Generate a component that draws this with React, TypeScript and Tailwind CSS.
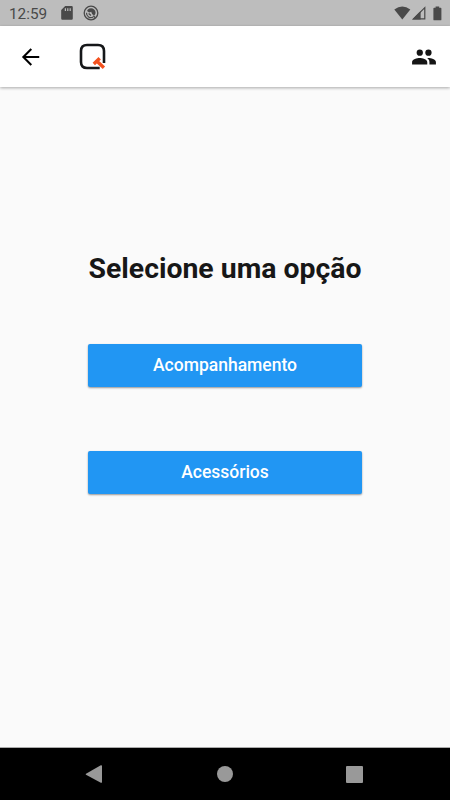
import React from "react";

function StatusBar() {
  return (
    <div className="flex h-[26px] shrink-0 items-center bg-[#bdbdbd] pl-[9px] pr-[8px] text-[#494949]">
      <span className="w-[52px] pt-[1px] text-[15.3px] leading-[26px]">12:59</span>
      <svg className="h-[14px] w-[12px]" viewBox="0 0 12 14" fill="currentColor">
        <path fillRule="evenodd" d="M4.2 0H10.6Q11.8 0 11.8 1.2V12.6Q11.8 13.8 10.6 13.8H1.4Q.2 13.8 .2 12.6V4ZM3.8 2.2V5H5V2.2ZM6.2 2.2V5H7.4V2.2ZM8.6 2.2V5H9.8V2.2Z" />
      </svg>
      <svg className="ml-[10px] h-4 w-4" viewBox="0 0 16 16" fill="none" stroke="currentColor">
        <circle cx="8" cy="8" r="6.8" strokeWidth="1.3" />
        <path d="M10.2 12A4.5 4.5 0 0 1 3.5 7.8" strokeWidth="1.2" />
        <path d="M4 6.1A4.4 4.4 0 0 1 12.3 9.1L11.4 10.6 9.2 9.3 8.2 6.8 6.2 7.6Z" fill="currentColor" stroke="none" />
        <path d="m5.6 8.6 2.4 2M10.2 10.8 12.4 12.7" strokeWidth="1.3" />
      </svg>
      <svg className="ml-auto h-[14px] w-[17px]" viewBox="0 0 17 14" fill="currentColor">
        <path d="M8.3 13.4.3 3.5Q8.3-2.7 16.3 3.5Z" />
      </svg>
      <svg className="ml-[1px] h-[14px] w-[14px]" viewBox="0 0 14 14">
        <path d="M.2 13.5 8.6 5.1V13.5Z" fill="currentColor" />
        <path d="M12.8 1.6V12.9H1.5Z" fill="none" stroke="currentColor" strokeWidth="1.2" />
      </svg>
      <svg className="ml-[7px] h-[15px] w-[9px]" viewBox="0 0 9 15" fill="currentColor">
        <path d="M2.6.4H6.2V1.8H7.6Q8.4 1.8 8.4 2.6V13.4Q8.4 14.3 7.6 14.3H1.2Q.4 14.3 .4 13.4V2.6Q.4 1.8 1.2 1.8H2.6Z" />
      </svg>
    </div>
  );
}

function AppBar() {
  return (
    <header className="z-10 flex h-[61px] shrink-0 items-center bg-white pl-[18px] pr-[13px] shadow-[0_1px_3px_rgba(0,0,0,0.33)]">
      <svg className="h-[26px] w-[26px]" viewBox="0.4 0 24 24" fill="#000">
        <path d="M20 11.1H7.6l5.75-5.75L12 4l-8 8 8 8 1.35-1.35L7.6 12.9H20v-1.8z" />
      </svg>
      <svg className="ml-[35px] h-[28px] w-[28px]" viewBox="0 0 28 28" fill="none">
        <path d="M20.7 25H8Q2 25 2 19V8Q2 2 8 2H19Q25 2 25 8V20" stroke="#151719" strokeWidth="2.6" />
        <path d="m14.8 21 5.9-5.8M18 18.2l6.9 6.5" stroke="#f4511e" strokeWidth="3.4" />
      </svg>
      <svg className="ml-auto h-[26px] w-[26px]" viewBox="0 0 24 24" fill="#151515">
        <circle cx="16.1" cy="8" r="2.9" />
        <circle cx="8.1" cy="8" r="2.9" />
        <path d="M8 13c-2.33 0-7 1.17-7 3.5V19h14v-2.5c0-2.33-4.67-3.5-7-3.5zm8 0c-.29 0-.62.02-.97.05 1.16.84 1.97 1.97 1.97 3.45V19h6v-2.5c0-2.33-4.67-3.5-7-3.5z" />
      </svg>
    </header>
  );
}

function OptionButton({ label }: { label: string }) {
  return (
    <button className="h-[43px] w-[274px] rounded-[2px] bg-[#2196f3] text-[17.5px] font-medium leading-[43px] text-white shadow-[0_1px_2px_rgba(0,0,0,0.4)]">
      {label}
    </button>
  );
}

export default function App() {
  return (
    <div className="flex h-[800px] w-[450px] flex-col overflow-hidden bg-[#fafafa] font-['Roboto',sans-serif]">
      <StatusBar />
      <AppBar />
      <main className="flex flex-1 flex-col items-center pt-[164px]">
        <h1 className="whitespace-nowrap text-[28.4px] font-bold leading-[36px] text-[#171717]">Selecione uma opção</h1>
        <div className="mt-[57px] flex flex-col gap-16">
          <OptionButton label="Acompanhamento" />
          <OptionButton label="Acessórios" />
        </div>
      </main>
      <nav className="flex h-[53px] shrink-0 items-center justify-between border-t border-[#aaa] bg-black pl-[85px] pr-[87px]">
        <svg className="h-[19px] w-[18px]" viewBox="0 0 18 19" fill="#999">
          <path d="M1 8.8 15.8.3Q17 0 17 1V17Q17 18.2 15.8 17.7L1 9.8Q.2 9.3 1 8.8Z" />
        </svg>
        <span className="ml-px h-4 w-4 rounded-full bg-[#999]" />
        <span className="h-[17px] w-[17px] rounded-[1px] bg-[#999]" />
      </nav>
    </div>
  );
}
